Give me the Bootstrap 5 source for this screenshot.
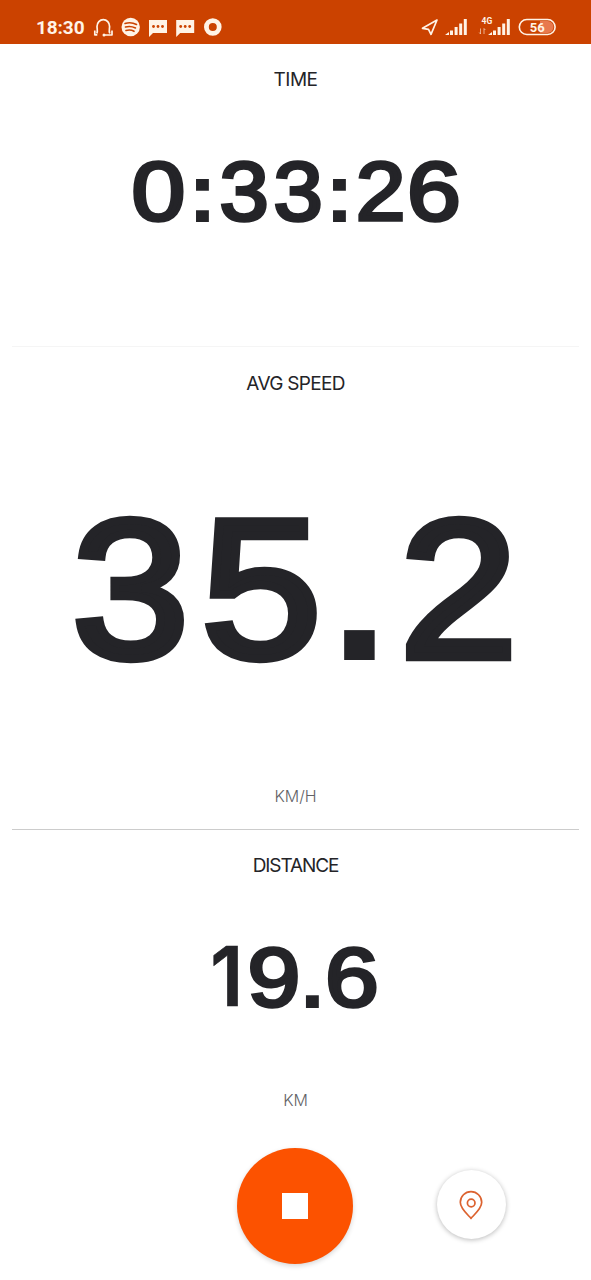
<!DOCTYPE html>
<html lang="en">
<head>
<meta charset="utf-8">
<meta name="viewport" content="width=device-width, initial-scale=1">
<title>Ride recording</title>
<link href="https://cdn.jsdelivr.net/npm/bootstrap@5.3.0/dist/css/bootstrap.min.css" rel="stylesheet">
<style>
  body { font-family: Inter, "Liberation Sans", sans-serif; color: #242428; background: #fff; }
  .screen { height: 1280px; }
  .status { height: 44px; background: #cb4200; color: #fff3e6; padding: 11px 35px 0 36px; font-family: Roboto, sans-serif; }
  .clock { font-size: 19px; font-weight: 700; line-height: 33px; width: 57px; letter-spacing: -.1px; }
  .status svg { display: block; flex: none; }
  .metric { margin: 0 12px; }
  .metric-time { height: 303px; padding-top: 26px; border-bottom: 1px solid #f5f5f5; }
  .metric-speed { height: 483px; padding-top: 27px; border-bottom: 1px solid #ccc; }
  .metric-distance { height: 299px; padding-top: 26px; }
  .label { font-size: 19px; line-height: 20px; letter-spacing: -.5px; }
  .metric-speed .label { letter-spacing: -.7px; }
  .metric-distance .label { letter-spacing: -1.1px; }
  .unit { font-size: 16px; line-height: 20px; color: #626266; font-weight: 300; letter-spacing: -.1px; }
  .value { font-family: "Liberation Sans", Arial, sans-serif; font-size: 84.5px; line-height: 84px; height: 84px; white-space: nowrap; }
  .value-lg { font-size: 200px; line-height: 196px; height: 196px; }
  .metric-time .value { margin-top: 60px; }
  .metric-speed .value { margin-top: 96.500px; padding-right: 3px; }
  .metric-speed .unit { margin-top: 99.500px; }
  .metric-distance .value { margin-top: 59px; }
  .metric-distance .unit { margin-top: 71px; }
  /* Numerals: each one is as wide as its ink, so the margins are the visible gaps. */
  .num { display: inline-flex; justify-content: center; -webkit-text-stroke: .042em currentColor; transform: scale(calc(var(--sx) * .97), .982); }
  .n0 { width: .604em; --sx: 1.18; }
  .n1 { width: .302em; --sx: .96; font-family: Inter, sans-serif; font-weight: 600; font-size: .99em; -webkit-text-stroke: .008em currentColor; }
  .n2 { width: .535em; --sx: 1.09; }
  .n3 { width: .546em; --sx: 1.08; }
  .n5 { width: .565em; --sx: 1.11; }
  .n6 { width: .59em; --sx: 1.18; }
  .n9 { width: .568em; --sx: 1.16; }
  .sep { width: .155em; margin: 0 .142em; font-weight: 700; -webkit-text-stroke: 0; transform: scaleX(1.08); position: relative; top: .0125em; }
  .sep-dot { margin: 0 .15em 0 .127em; }
  .metric-distance .sep-dot { margin: 0 .1em 0 .095em; }
  .controls { display: grid; grid-template-columns: 237px 116px 84px 69px; align-items: center; height: 116px; margin-top: 19px; }
  .btn-stop { grid-column: 2; width: 116px; height: 116px; background: #fc5200; box-shadow: 0 2px 5px rgba(0,0,0,.16); }
  .btn-map { grid-column: 4; width: 69px; height: 69px; margin-top: -3px; background: #fff; box-shadow: 0 1px 5px rgba(0,0,0,.28); }
</style>
</head>
<body>
<div class="screen d-flex flex-column overflow-hidden">
  <header class="status d-flex justify-content-between align-items-start">
    <div class="d-flex align-items-start">
      <span class="clock">18:30</span>
      <svg width="130" height="32" viewBox="93 11 130 32" fill="#fff3e6">
        <path d="M96.800 33.500C98 31 97 29 97 26.500a6.300 6.800 0 0 1 12.600 0c0 2.500-1 4.500.200 7M94.800 30.500v5M112 30.500v5M112 35h-7M94.800 34.800h2.500" fill="none" stroke="#fff3e6" stroke-width="1.700"/>
        <circle cx="104" cy="35" r="1.500"/>
        <circle cx="130.700" cy="27" r="9.200"/>
        <path d="M125 23.500q6-2 11.500 1M125.500 27q5-1.500 10 1M126 30.500q4.500-1.300 8 .800" fill="none" stroke="#cb4200" stroke-width="1.600" stroke-linecap="round"/>
        <path d="M149 20h18v13h-14l-4 4zM176.200 20h18v13h-14l-4 4z"/>
        <g fill="#cb4200"><circle cx="153.500" cy="26.500" r="1.400"/><circle cx="158" cy="26.500" r="1.400"/><circle cx="162.500" cy="26.500" r="1.400"/><circle cx="180.700" cy="26.500" r="1.400"/><circle cx="185.200" cy="26.500" r="1.400"/><circle cx="189.700" cy="26.500" r="1.400"/></g>
        <circle cx="212.800" cy="27" r="6.400" fill="none" stroke="#fff3e6" stroke-width="4.800"/>
      </svg>
    </div>
    <svg width="136" height="32" viewBox="420 11 136 32" fill="#fff3e6">
      <path d="M437 20L422.500 28.300l6 1 2.500 5z" fill="none" stroke="#fff3e6" stroke-width="1.700" stroke-linejoin="round"/>
      <path d="M445 35l4-3v3zM450 30.500h3V35h-3zM454.600 27h3v8h-3zM459.200 23.500h3V35h-3zM463.800 19h3v16h-3zM488 35l4-3v3zM493 30.500h3V35h-3zM497.600 27h3v8h-3zM502.200 23.500h3V35h-3zM506.800 19h3v16h-3z"/>
      <path d="M480.500 28.500V34m-1.300-1.500 1.300 1.500M484 34v-5.500l1.300 1.500" fill="none" stroke="#fff3e6" stroke-opacity=".6"/>
      <text x="481.500" y="24.300" font-size="8.500" font-weight="700">4G</text>
      <path d="M540 21h7.500a6 6 0 0 1 0 12H540z" fill="#e8794e"/>
      <rect x="519.300" y="19.500" width="35.800" height="15" rx="7.500" fill="none" stroke="#fff3e6" stroke-width="1.600"/>
      <text x="537.200" y="31.700" font-size="13" font-weight="700" text-anchor="middle">56</text>
    </svg>
  </header>

  <main class="text-center">
    <section class="metric metric-time">
      <div class="label">TIME</div>
      <div class="value"><span class="num n0">0</span><span class="num sep">:</span><span class="num n3">3</span><span class="num n3" style="margin-left:.1em">3</span><span class="num sep">:</span><span class="num n2">2</span><span class="num n6" style="margin-left:.06em">6</span></div>
    </section>
    <section class="metric metric-speed">
      <div class="label">AVG SPEED</div>
      <div class="value value-lg"><span class="num n3">3</span><span class="num n5" style="margin-left:.0975em">5</span><span class="num sep sep-dot">.</span><span class="num n2">2</span></div>
      <div class="unit">KM/H</div>
    </section>
    <section class="metric metric-distance">
      <div class="label">DISTANCE</div>
      <div class="value"><span class="num n1">1</span><span class="num n9" style="margin-left:.13em">9</span><span class="num sep sep-dot">.</span><span class="num n6">6</span></div>
      <div class="unit">KM</div>
    </section>
  </main>

  <footer class="controls">
    <button class="btn-stop btn rounded-circle border-0 p-0 d-flex align-items-center justify-content-center" aria-label="Stop">
      <svg width="26" height="26"><path d="M0 0h26v26H0z" fill="#fff"/></svg>
    </button>
    <button class="btn-map btn rounded-circle border-0 p-0 d-flex align-items-center justify-content-center" aria-label="Map">
      <svg width="28" height="30" viewBox="0 0 28 30" fill="none" stroke="#dc622f" stroke-width="1.700"><path d="M13 28.300C9 24 2.300 18.500 2.300 12.300a10.700 10.700 0 0 1 21.400 0C23.700 18.500 17 24 13 28.300z"/><circle cx="13.200" cy="13" r="3.800"/></svg>
    </button>
  </footer>
</div>
<script src="https://cdn.jsdelivr.net/npm/bootstrap@5.3.0/dist/js/bootstrap.bundle.min.js"></script>
</body>
</html>
